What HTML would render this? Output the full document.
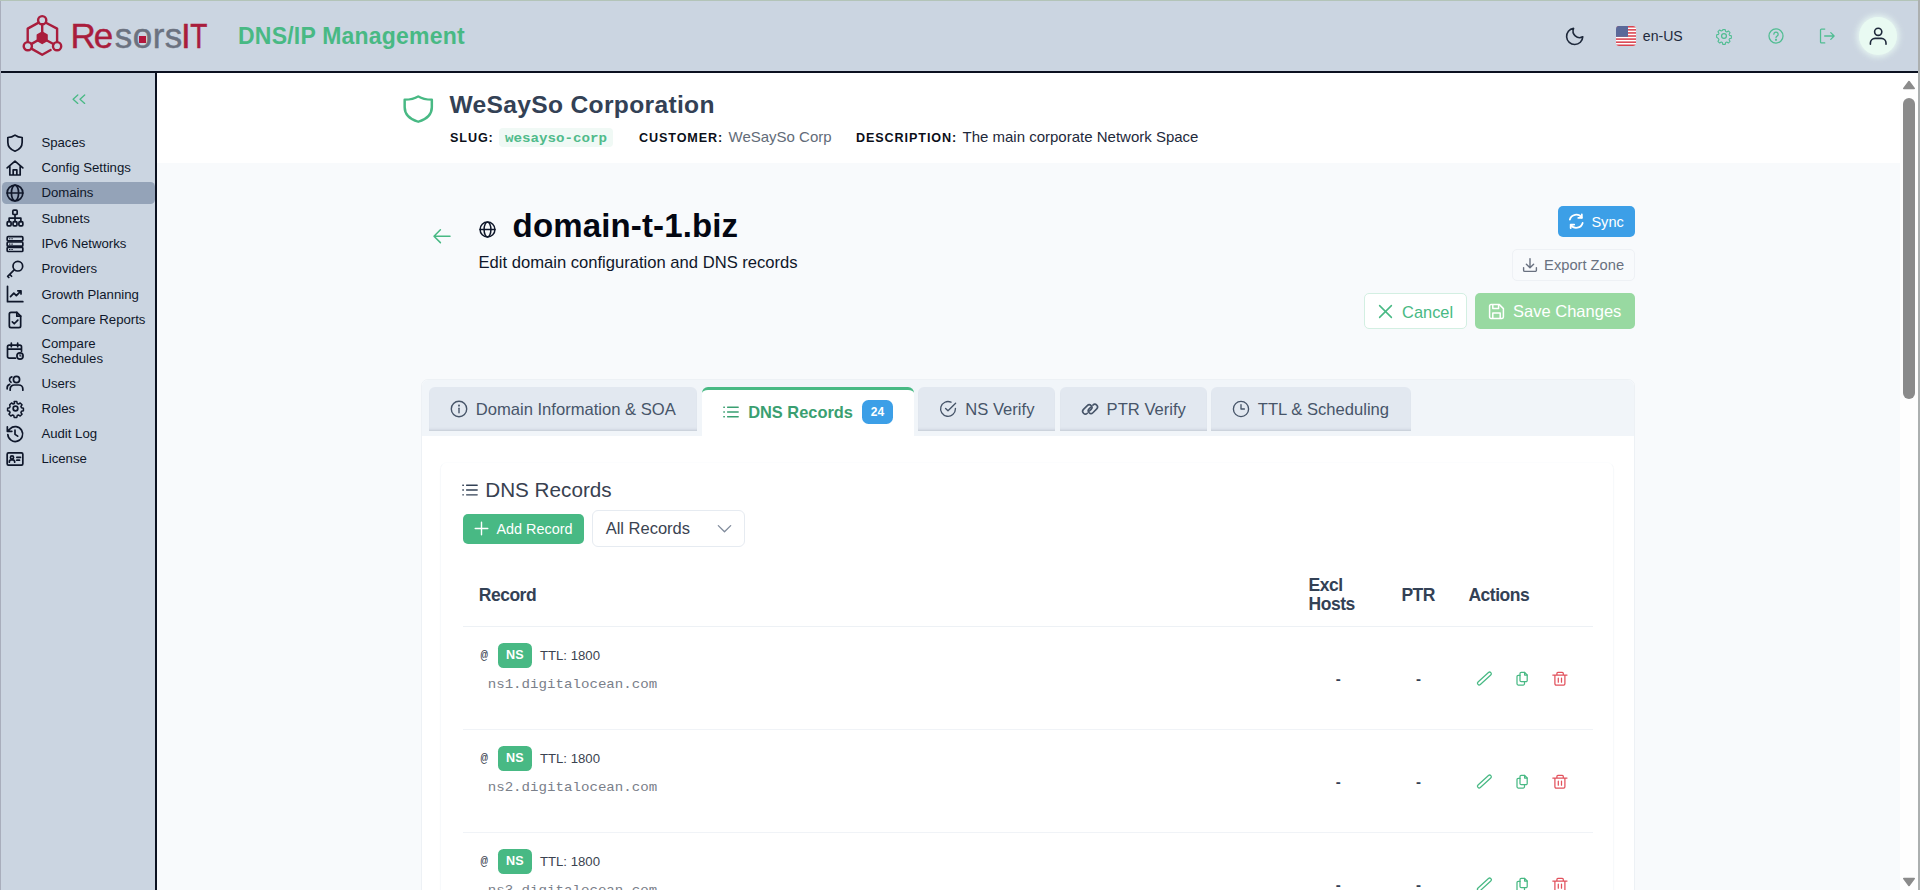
<!DOCTYPE html>
<html lang="en">
<head>
<meta charset="utf-8">
<title>DNS/IP Management - domain-t-1.biz</title>
<style>
*{box-sizing:border-box;margin:0;padding:0}
button{font-family:inherit;border:0;cursor:pointer}
h1,h2,h3,p{font-weight:400}
html,body{width:1920px;height:890px;overflow:hidden;background:#fff}
body{font-family:"Liberation Sans",sans-serif;color:#0f172a;position:relative}
svg{display:block;overflow:visible}
.ic{fill:none;stroke:currentColor;stroke-linecap:round;stroke-linejoin:round}
.abs{position:absolute}
/* window frame */
#frame-l{position:absolute;left:0;top:0;width:1px;height:890px;background:#a9aebc;z-index:50}
#frame-t{position:absolute;left:0;top:0;width:1920px;height:1px;background:#b3c4b8;z-index:50}
#frame-r{position:absolute;left:1918px;top:0;width:2px;height:890px;background:#acb0b0;z-index:50}
/* header */
header{position:absolute;left:0;top:0;width:1920px;height:73px;background:#cbd5e1;border-bottom:2px solid #0b1120}

/* header parts */
#logo{position:absolute;left:21px;top:13px;width:44px;height:44px;color:#a91d3c}
#brand{position:absolute;left:70.500px;top:15.500px;height:40px;line-height:40px;font-size:35px;letter-spacing:-.75px;color:#a91d3c;white-space:nowrap;-webkit-text-stroke:.45px currentColor}
#brand .r1{letter-spacing:-2px}#brand .g{color:#6b7280;letter-spacing:.5px;margin-left:3.5px}#brand .r2{letter-spacing:-4px;margin-left:-1.800px}#brand .t{display:inline-block;transform:scaleX(.8);transform-origin:96% 50%;-webkit-text-stroke:.55px currentColor}
#brand .dot{position:absolute;left:68.700px;top:20px;width:7px;height:7px;background:#b3173c}
#apptitle{position:absolute;left:238px;top:20px;height:32px;line-height:32px;font-size:23px;letter-spacing:.21px;font-weight:700;color:#48b984;white-space:nowrap}
.hbtn{position:absolute;top:27px;width:18px;height:18px}
#lang{position:absolute;left:1642.800px;top:26px;height:20px;line-height:20px;font-size:14.100px;color:#1e293b}
#flag{position:absolute;left:1616px;top:26px;width:20px;height:20px;border-radius:3px;overflow:hidden}
#avatar{position:absolute;left:1859px;top:17px;width:38px;height:38px;border-radius:50%;background:#e9faf2;box-shadow:0 0 6px 2px rgba(236,253,245,.85);color:#1e293b}
/* sidebar */
nav#side{position:absolute;left:0;top:73px;width:157px;height:817px;background:#cbd5e1;border-right:2px solid #0b1120}

#side ul{list-style:none;position:absolute;left:0;top:58.700px;width:155px}
#side li{position:relative;height:21.700px;margin:0 0 3.600px 2px;width:152.500px;border-radius:4.500px;font-size:13.200px;line-height:15.200px;color:#0f172a}
#side li.on{background:#94a3b8}
#side li svg{position:absolute;left:3px;top:.850px;width:20px;height:20px}
#side li span{position:absolute;left:39.400px;top:3.150px;white-space:nowrap}
#side li.two{height:36.200px;margin-top:-1.300px}
#side li.two svg{top:8.100px}
#collapse{position:absolute;left:71px;top:19px;width:16px;height:14px;color:#48b984}
/* main */
main{position:absolute;left:157px;top:73px;width:1743px;height:817px;background:#f8fafc;overflow:hidden}
#spacebar{position:absolute;left:0;top:0;width:1743px;height:90px;background:#fff}

/* main content: coordinates relative to main (157,73) */
.m{position:absolute;white-space:nowrap}
#sp-shield{left:243.900px;top:20.300px;width:34.500px;height:31.500px;color:#48b984}
#sp-title{left:292.500px;top:16px;height:32px;line-height:32px;font-size:24.600px;font-weight:700;letter-spacing:.32px;color:#334155}
.lbl{font-size:12.600px;font-weight:700;letter-spacing:.9px;color:#0b0f19;height:20px;line-height:20px;top:54.500px}
.val{font-size:15px;height:20px;line-height:20px;top:54.300px}
#slug{left:341.700px;top:54.800px;width:114.600px;height:19.700px;border-radius:4px;background:#f0f9f5;color:#50bb8b;font-family:"Liberation Mono",monospace;font-size:14.200px;line-height:19.700px;text-align:center}
#back{left:274px;top:155px;width:22px;height:16px;color:#48b984}
#h-globe{left:320.500px;top:147px;width:19px;height:19px;color:#0f172a}
#h1{left:355.600px;top:132.200px;height:42px;line-height:42px;font-size:33px;font-weight:700;letter-spacing:.14px;color:#030712}
#sub{left:321.500px;top:179.300px;height:22px;line-height:22px;font-size:16.600px;color:#0f172a}
.btn{position:absolute;border-radius:5px;white-space:nowrap}
.btn svg{position:absolute}
.btn span{position:absolute}
#b-sync{left:1400.700px;top:132.800px;width:77.100px;height:31.700px;background:#3c9fe7;color:#fff;font-size:14.600px}
#b-exp{left:1354.500px;top:176.400px;width:123.300px;height:31.300px;background:#f8fafc;border:1px solid #eef1f5;color:#697180;font-size:14.700px}
#b-cancel{left:1206.600px;top:220px;width:103px;height:36.200px;background:#fff;border:1px solid #d3efe2;color:#48b984;font-size:16.400px}
#b-save{left:1317.700px;top:220px;width:160.100px;height:36.200px;background:#98d9a1;color:#fff;font-size:16.500px}

#slug span{display:inline-block;transform:translateY(.8px) scaleY(.92);font-weight:700;-webkit-text-stroke:0}
/* tabs card */
#card{position:absolute;left:263.500px;top:306.300px;width:1214.500px;height:640px;background:#fff;border:1px solid #edf1f5;border-radius:7px;overflow:hidden}
#tabnav{position:absolute;left:0;top:0;width:1214px;height:56px;background:#f1f5f9}
.tab{position:absolute;top:6.400px;height:44.300px;background:#e2e8f0;border-radius:6px 6px 0 0;box-shadow:inset 0 -3px 3px -2px rgba(71,85,105,.22);color:#475569;font-size:16.600px}
.tab svg{position:absolute;top:13.600px;width:18px;height:18px}
.tab span{position:absolute;top:13px;line-height:20px;white-space:nowrap}
.tab.on{background:#fff;height:50px;box-shadow:none;border-top:3px solid #48b984;color:#3a9f71;font-weight:700;font-size:16.400px}
.tab.on svg{top:13px}
.tab.on span{top:12.300px}
#badge{position:absolute;left:160.500px;top:10px;width:30.400px;height:24.300px;border-radius:6.500px;background:#3c9fe7;color:#fff;font-size:12px;font-weight:700;line-height:24.300px;text-align:center}
#inner{position:absolute;left:18.700px;top:82px;width:1174px;height:600px;background:#fff;border:1px solid #f7f9fb;border-top-color:#fcfdfe;border-radius:7px;box-shadow:0 1px 2px rgba(15,23,42,.02)}

/* inner card content: coords relative to #inner (left 441.2, top 462.3 page) */
#inner .t{position:absolute;white-space:nowrap}
#sec-ic{left:20.300px;top:17.800px;width:18px;height:18px;color:#334155}
#sec-h{left:44px;top:13.800px;height:26px;line-height:26px;font-size:20.700px;color:#384150}
#b-add{left:21.500px;top:50.700px;width:121.300px;height:30px;background:#48b984;color:#fff;font-size:14.400px}
#dd{position:absolute;left:151.100px;top:46.800px;width:152.400px;height:36.500px;background:#fff;border:1px solid #e6ebf1;border-radius:6px;color:#3a4351;font-size:16.500px}
#dd span{position:absolute;left:12.400px;top:7px;line-height:20px}
#dd svg{position:absolute;left:123.300px;top:11.600px;width:15px;height:11.250px;color:#7f8a9b}
table#rec{position:absolute;left:22px;top:98px;width:1129.500px;border-collapse:collapse;table-layout:fixed}
#rec th{height:65.700px;text-align:left;font-size:17.500px;letter-spacing:-.5px;font-weight:700;color:#334155;line-height:19px;padding-top:2.500px!important;border-bottom:1px solid #edf1f5;padding:0;vertical-align:middle}
#rec td{height:103px;border-bottom:1px solid #f0f3f7;padding:0;vertical-align:top;position:relative}
#rec tr>:nth-child(1){width:829px;padding-left:15.600px}
#rec tr>:nth-child(2){width:93.500px;padding-left:16.400px}
#rec tr>:nth-child(3){width:66.300px;padding-left:15.700px}
#rec tr>:nth-child(4){padding-left:16.500px}
.rrow{position:absolute;left:16px;top:16.300px;height:26px;white-space:nowrap}
.at{position:absolute;left:1.200px;top:3.700px;font-family:"Liberation Mono",monospace;font-size:12.400px;line-height:18px;color:#3b4350}
.ns{position:absolute;left:18.600px;top:-.4px;width:34px;height:24.400px;border-radius:5.500px;background:#48b984;color:#fff;font-size:12.600px;font-weight:700;line-height:24.400px;text-align:center}
.ttl{position:absolute;left:60.700px;top:3.400px;font-size:13.200px;line-height:18px;color:#3b4350}
.rv{position:absolute;left:24.500px;top:46.700px;font-family:"Liberation Mono",monospace;font-size:14.130px;line-height:20px;color:#7a808a;white-space:nowrap;transform:scaleY(.9);transform-origin:0 76%}
.dash{position:absolute;top:43px;font-size:15px;line-height:18px;color:#334155;font-weight:700}
.act{position:absolute;top:41.200px;width:18px;height:18px}
/* scrollbar */
#sb{position:absolute;left:1900px;top:73px;width:18px;height:817px;background:#fefefe}
#sb i{position:absolute;left:2.700px;top:25.200px;width:12.200px;height:300.500px;border-radius:6.100px;background:#8b8b8b}
#sb svg{position:absolute;left:2px;width:14px;height:10px;fill:#8b8b8b;stroke:#8b8b8b;stroke-width:1.600;stroke-linejoin:round}
</style>
</head>
<body>
<header>
<svg id="logo" viewBox="0 0 44 44"><g class="ic" stroke-width="2.4" stroke-linejoin="miter">
<circle cx="21.2" cy="7.2" r="4.1"/><circle cx="6.8" cy="33.2" r="4.1"/><circle cx="36.1" cy="33.2" r="4.1"/>
<path d="M17.6 9.6 L6.7 15.6 V28.6 M25.4 10 L36.1 15.6 V28.6 M10.4 35.6 L21.2 41.7 L29.6 37"/>
<path d="M21.2 11.5 V20 M16.5 27.5 L10.6 30.9 M25.9 27.5 L32.4 31"/></g>
<path d="M21.2 19.3 L26 22 V27.6 L21.2 30.4 L16.4 27.6 V22 Z" fill="currentColor" stroke="currentColor" stroke-width="1.6" stroke-linejoin="round"/></svg>
<div id="brand"><span class="r1">Re</span><span class="g">sors</span><span class="r2">I<span class="t">T</span></span><span class="dot"></span></div>
<div id="apptitle">DNS/IP Management</div>
<svg class="hbtn" style="left:1565px;top:26px;width:20px;height:20px;color:#1e293b" viewBox="0 0 20 20"><path class="ic" stroke-width="1.6" d="M8.600 2.400 A8.100 8.100 0 1 0 17.800 10.800 A6.600 6.600 0 0 1 8.600 2.400 Z"/></svg>
<svg id="flag" viewBox="0 0 20 20"><rect width="20" height="20" fill="#fff"/>
<g fill="#d9434f"><rect y="0" width="20" height="1.55"/><rect y="3.08" width="20" height="1.55"/><rect y="6.16" width="20" height="1.55"/><rect y="9.24" width="20" height="1.55"/><rect y="12.32" width="20" height="1.55"/><rect y="15.4" width="20" height="1.55"/><rect y="18.48" width="20" height="1.55"/></g>
<rect width="12" height="10.800" fill="#5a6899"/></svg>
<div id="lang">en-US</div>
<svg class="hbtn" style="left:1715px;color:#50bd92" viewBox="0 0 20 20"><g class="ic" stroke-width="1.4"><circle cx="10" cy="10" r="2.7"/><path d="M8.4 1.8h3.2l.5 2.3 1.5.7 2-1.3 2.2 2.2-1.3 2 .7 1.5 2.3.5v3.2l-2.3.5-.7 1.5 1.3 2-2.2 2.2-2-1.3-1.5.7-.5 2.3H8.4l-.5-2.3-1.5-.7-2 1.3-2.2-2.2 1.3-2-.7-1.5L.5 11.6V8.4l2.3-.5.7-1.5-1.3-2 2.2-2.2 2 1.3 1.500-.7z" transform="translate(1.4 1.4) scale(.86)"/></g></svg>
<svg class="hbtn" style="left:1766.600px;color:#50bd92" viewBox="0 0 20 20"><g class="ic" stroke-width="1.4"><circle cx="10" cy="10" r="7.8"/><path d="M7.6 8a2.4 2.4 0 1 1 3.6 2.1c-.8.5-1.200.9-1.200 1.800"/><circle cx="10" cy="14.300" r=".5" fill="currentColor"/></g></svg>
<svg class="hbtn" style="left:1817.800px;color:#50bd92" viewBox="0 0 20 20"><g class="ic" stroke-width="1.4"><path d="M7.500 2.300H3.800a1 1 0 0 0-1 1v13.400a1 1 0 0 0 1 1h3.700"/><path d="M7.400 10h10.400M14.200 6.300 17.900 10l-3.700 3.700"/></g></svg>
<div id="avatar"><svg viewBox="0 0 38 38" width="38" height="38"><g class="ic" stroke-width="1.6"><circle cx="19.200" cy="14.800" r="3.600"/><path d="M11.400 27.200v-1.100a4.700 4.700 0 0 1 4.700-4.700h6.200a4.700 4.700 0 0 1 4.700 4.700v1.100"/></g></svg></div>
</header>
<nav id="side">
<svg id="collapse" viewBox="0 0 16 14"><g class="ic" stroke-width="1.300"><path d="M6.800 3 2.100 7.200 6.800 11.400M13.700 3 9 7.200l4.700 4.200"/></g></svg>
<ul>
<li class=""><svg viewBox="0 0 24 24"><g class="ic" stroke-width="2.050"><path d="M12 2.600C9.300 4.700 6.400 5.400 3.400 5.400v5.800c0 5.300 3.300 8.900 8.600 10.700 5.300-1.800 8.600-5.400 8.600-10.700V5.400c-3 0-5.900-.7-8.600-2.800z"/></g></svg><span>Spaces</span></li>
<li class=""><svg viewBox="0 0 24 24"><g class="ic" stroke-width="2.050"><path d="M2.600 11.800 12 3.800l9.400 8M5.800 9.800v10.600h12.400V9.800M9.800 20.400v-6.200h4.400v6.200"/></g></svg><span>Config Settings</span></li>
<li class="on"><svg viewBox="0 0 24 24"><g class="ic" stroke-width="2.050"><circle cx="12" cy="12" r="9.400"/><path d="M2.600 12h18.800"/><ellipse cx="12" cy="12" rx="4.300" ry="9.400"/></g></svg><span>Domains</span></li>
<li class=""><svg viewBox="0 0 24 24"><g class="ic" stroke-width="2.050"><rect x="9.400" y="2.600" width="5.200" height="5.200" rx="1.200"/><rect x="2.600" y="16.400" width="4.700" height="5" rx="1.200"/><rect x="9.650" y="16.400" width="4.700" height="5" rx="1.200"/><rect x="16.700" y="16.400" width="4.700" height="5" rx="1.200"/><path d="M12 7.800v8.600M4.950 16.400v-4.200h14.100v4.200"/></g></svg><span>Subnets</span></li>
<li class=""><svg viewBox="0 0 24 24"><g class="ic" stroke-width="2.050"><rect x="2.600" y="3.200" width="18.800" height="5" rx="1.200"/><rect x="2.600" y="9.600" width="18.800" height="5" rx="1.200"/><rect x="2.600" y="16" width="18.800" height="5" rx="1.200"/><path d="M5.400 5.700h.6M8.200 5.700h.6M5.400 12.100h.6M8.200 12.100h.6M5.400 18.500h.6M8.200 18.500h.6" stroke-width="1.300"/></g></svg><span>IPv6 Networks</span></li>
<li class=""><svg viewBox="0 0 24 24"><g class="ic" stroke-width="2.050"><circle cx="15.400" cy="8.600" r="5.800"/><path d="M11.300 12.700 3.200 20.800M5.600 18.400l2.300 2.300M3.200 20.800l1.400 1.400"/></g></svg><span>Providers</span></li>
<li class=""><svg viewBox="0 0 24 24"><g class="ic" stroke-width="2.050"><path d="M3 2.800v18.400h18.400"/><path d="M6.600 15.200l4-4.200 3 3 5.600-5.800M15.400 8.200h3.800v3.800"/></g></svg><span>Growth Planning</span></li>
<li class=""><svg viewBox="0 0 24 24"><g class="ic" stroke-width="2.050"><path d="M14.200 2.800H7.200a2 2 0 0 0-2 2v14.400a2 2 0 0 0 2 2h9.600a2 2 0 0 0 2-2V7.400z"/><path d="M14.200 2.800v4.600h4.600M8.800 14.200l2.300 2.300 4.300-4.400"/></g></svg><span>Compare Reports</span></li>
<li class="two"><svg viewBox="0 0 24 24"><g class="ic" stroke-width="2.050"><path d="M12.400 20.600H5a2 2 0 0 1-2-2V7a2 2 0 0 1 2-2h12.800a2 2 0 0 1 2 2v5.200M3 9.800h16.800M7.600 2.600v4.200M15.200 2.600v4.200"/><circle cx="18" cy="18" r="3.700"/><path d="M18 16.200V18h1.400" stroke-width="1.300"/></g></svg><span>Compare<br>Schedules</span></li>
<li class=""><svg viewBox="0 0 24 24"><g class="ic" stroke-width="2.050"><circle cx="13.800" cy="7.800" r="3.700"/><path d="M6.200 20.600v-1.400a4.800 4.800 0 0 1 4.800-4.800h5.600a4.800 4.800 0 0 1 4.800 4.800v1.400"/><path d="M8.200 4.600a3.500 3.500 0 0 0-1 6.500M2.600 19v-1.200a4.400 4.400 0 0 1 3-4.200"/></g></svg><span>Users</span></li>
<li class=""><svg viewBox="0 0 24 24"><g class="ic" stroke-width="2.050"><circle cx="12.600" cy="11.400" r="2.800"/><path d="M10.200 2.600h3.600l.6 2.700 1.700.7 2.300-1.500 2.500 2.500-1.500 2.300.7 1.700 2.700.6v3.600l-2.700.6-.7 1.700 1.500 2.300-2.500 2.500-2.300-1.500-1.700.7-.6 2.700h-3.600l-.6-2.700-1.700-.7-2.300 1.500-2.500-2.500 1.500-2.300-.7-1.700-2.700-.6v-3.600l2.700-.6.7-1.700L4.100 7l2.500-2.500 2.300 1.500 1.700-.7z" transform="translate(2.040 .840) scale(.88)"/></g></svg><span>Roles</span></li>
<li class=""><svg viewBox="0 0 24 24"><g class="ic" stroke-width="2.050"><path d="M3.400 12.600A8.900 8.900 0 1 0 6 5.800L2.800 8.800M2.800 3.400v5.400h5.400M12 7.400v5l3.200 2.200"/></g></svg><span>Audit Log</span></li>
<li class=""><svg viewBox="0 0 24 24"><g class="ic" stroke-width="2.050"><rect x="2.600" y="4.600" width="18.800" height="14.800" rx="1.600"/><circle cx="8.400" cy="10.200" r="1.900"/><path d="M5.200 15.800v-.4a2.400 2.400 0 0 1 2.400-2.400h1.600a2.400 2.400 0 0 1 2.400 2.400v.4M14.200 10h4.400M14.200 13.400h3.200"/></g></svg><span>License</span></li>
</ul>
</nav>
<main>
<section id="spacebar">
<svg class="m" id="sp-shield" viewBox="0 0 32 32" preserveAspectRatio="none"><path class="ic" stroke-width="2.300" d="M16 3.400c-3.600 2.600-7.800 3.400-12.600 3.400v7.600c0 7.400 4.800 12.200 12.600 14.800 7.800-2.600 12.600-7.400 12.600-14.800V6.800c-4.800 0-9-.8-12.600-3.400z"/></svg>
<h2 class="m" id="sp-title">WeSaySo Corporation</h2>
<span class="m lbl" style="left:293px">SLUG:</span><code class="m" id="slug"><span>wesayso-corp</span></code>
<span class="m lbl" style="left:482px">CUSTOMER:</span><span class="m val" style="left:571.500px;color:#626b78">WeSaySo Corp</span>
<span class="m lbl" style="left:699px">DESCRIPTION:</span><span class="m val" style="left:805.500px;color:#1e293b">The main corporate Network Space</span>
</section>
<svg class="m" id="back" viewBox="0 0 22 16"><path class="ic" stroke-width="1.500" d="M19 8.200H3M9.400 1.800 3 8.200l6.400 6.400"/></svg>
<svg class="m" id="h-globe" viewBox="0 0 24 24"><g class="ic" stroke-width="1.900"><circle cx="12" cy="12" r="9.400"/><path d="M2.600 12h18.800"/><ellipse cx="12" cy="12" rx="4.300" ry="9.400"/></g></svg>
<h1 class="m" id="h1">domain-t-1.biz</h1>
<p class="m" id="sub">Edit domain configuration and DNS records</p>
<button class="btn" id="b-sync"><svg style="left:10.300px;top:7.600px;width:16.500px;height:16.500px" viewBox="0 0 16 16"><g class="ic" stroke-width="1.750" transform="translate(16 0) scale(-1 1)"><path d="M14.200 6.400A6.400 6.400 0 0 0 2.800 4.400M1.800 9.600a6.400 6.400 0 0 0 11.400 2"/><path d="M2.600 1.400v3.400H6M13.400 14.600v-3.400H10"/></g></svg><span style="left:33.700px;top:7px;line-height:18px">Sync</span></button>
<button class="btn" id="b-exp"><svg style="left:9px;top:6.600px;width:16px;height:16px" viewBox="0 0 16 16"><g class="ic" stroke-width="1.400"><path d="M8 1.600v9M4.400 7.200 8 10.800l3.600-3.600M1.600 10.600v2.600a1.200 1.200 0 0 0 1.200 1.200h10.400a1.200 1.200 0 0 0 1.200-1.200v-2.600"/></g></svg><span style="left:31.600px;top:5.800px;line-height:18px">Export Zone</span></button>
<button class="btn" id="b-cancel"><svg style="left:13.500px;top:10px;width:15px;height:15px" viewBox="0 0 15 15"><path class="ic" stroke-width="1.500" d="M1.600 1.600 13.400 13.400M13.400 1.600 1.600 13.400"/></svg><span style="left:37.500px;top:7.600px;line-height:20px">Cancel</span></button>
<button class="btn" id="b-save"><svg style="left:13px;top:10px;width:17px;height:17px" viewBox="0 0 17 17"><g class="ic" stroke-width="1.500"><path d="M1.600 3a1.400 1.400 0 0 1 1.400-1.400h8.400l4 4V14a1.400 1.400 0 0 1-1.400 1.400H3A1.400 1.400 0 0 1 1.600 14z"/><path d="M4.800 1.800v3.600h5.800V1.800M4.800 15.200V10h7.400v5.200"/></g></svg><span style="left:38.400px;top:7.600px;line-height:20px">Save Changes</span></button>
<section id="card">
<div id="tabnav">
<div class="tab" style="left:7.500px;width:267.700px"><svg style="left:20.600px" viewBox="0 0 18 18"><g class="ic" stroke-width="1.400"><circle cx="9" cy="9" r="7.700"/><path d="M9 8.200v4.600"/><circle cx="9" cy="5.600" r=".4" fill="currentColor"/></g></svg><span style="left:46.700px">Domain Information &amp; SOA</span></div>
<div class="tab on" style="left:280.200px;width:212.600px"><svg style="left:20.800px" viewBox="0 0 18 18"><g class="ic" stroke-width="1.400"><path d="M5.600 4.200h10.600M5.600 9h10.600M5.600 13.800h10.600M1.800 4.200h.6M1.800 9h.6M1.800 13.800h.6"/></g></svg><span style="left:46.500px">DNS Records</span><b id="badge">24</b></div>
<div class="tab" style="left:496.800px;width:136.700px"><svg style="left:20.500px" viewBox="0 0 18 18"><g class="ic" stroke-width="1.350"><path d="M16.400 8.300V9a7.400 7.400 0 1 1-4.400-6.800"/><path d="M16.600 3.200 9 10.800 6.600 8.400"/></g></svg><span style="left:47px">NS Verify</span></div>
<div class="tab" style="left:638.700px;width:146.800px"><svg style="left:20.500px" viewBox="0 0 18 18"><g class="ic" stroke-width="1.600"><path transform="translate(6.300 9.400) rotate(-45)" d="M-2.700 2.700a2.700 2.700 0 0 1 0-5.400H2.700a2.700 2.700 0 0 1 0 5.400H.400"/><path transform="translate(11.900 8.900) rotate(-45)" d="M2.700-2.700a2.700 2.700 0 0 1 0 5.400H-2.700a2.700 2.700 0 0 1 0-5.400H-.400"/></g></svg><span style="left:46.400px">PTR Verify</span></div>
<div class="tab" style="left:789.900px;width:199.400px"><svg style="left:20.500px" viewBox="0 0 18 18"><g class="ic" stroke-width="1.350"><circle cx="9" cy="9" r="7.600"/><path d="M9 4.600V9h3.400"/></g></svg><span style="left:46.400px">TTL &amp; Scheduling</span></div>
</div>
<div id="inner">
<svg class="t" id="sec-ic" viewBox="0 0 18 18"><g class="ic" stroke-width="1.350"><path d="M5.600 4.200h10.600M5.600 9h10.600M5.600 13.800h10.600M1.800 4.200h.6M1.800 9h.6M1.800 13.800h.6"/></g></svg>
<h3 class="t" id="sec-h">DNS Records</h3>
<button class="btn" id="b-add"><svg style="left:11px;top:7.500px;width:15px;height:15px" viewBox="0 0 15 15"><path class="ic" stroke-width="1.400" d="M7.500 1.200v12.600M1.200 7.500h12.600"/></svg><span style="left:33.800px;top:6px;line-height:18px">Add Record</span></button>
<div id="dd"><span>All Records</span><svg viewBox="0 0 16 12"><path class="ic" stroke-width="1.400" d="M1.400 2.800 8 9.400l6.600-6.600"/></svg></div>
<table id="rec">
<thead><tr><th>Record</th><th>Excl<br>Hosts</th><th>PTR</th><th>Actions</th></tr></thead>
<tbody>
<tr><td><div class="rrow"><span class="at">@</span><b class="ns">NS</b><span class="ttl">TTL: 1800</span></div><code class="rv">ns1.digitalocean.com</code></td><td><span class="dash" style="left:43.500px">-</span></td><td><span class="dash" style="left:30.300px">-</span></td><td><svg class="act" style="left:24px;color:#48b984" viewBox="0 0 18 18"><rect class="ic" stroke-width="1.250" x="-8.750" y="-1.700" width="17.500" height="3.400" rx="1.700" transform="translate(8.400 9.550) rotate(-42.400)"/></svg><svg class="act" style="left:61.500px;color:#48b984" viewBox="0 0 18 18"><g class="ic" stroke-width="1.250"><path d="M8.200 3.400h3.400l2.600 2.600v5.500a1.200 1.200 0 0 1-1.200 1.200H8.200a1.200 1.200 0 0 1-1.200-1.200V4.600a1.200 1.200 0 0 1 1.200-1.200z"/><path d="M11.600 3.400v2.600h2.600"/><path d="M7 6.400H5.200a1.200 1.200 0 0 0-1.200 1.200v7.200a1.200 1.200 0 0 0 1.200 1.200h5.100a1.200 1.200 0 0 0 1.200-1.200v-2.100"/></g></svg><svg class="act" style="left:99px;color:#e2515c" viewBox="0 0 18 18"><g class="ic" stroke-width="1.250"><path d="M1.800 6.100H16M5.900 6.100V4.400a1 1 0 0 1 1-1h4.400a1 1 0 0 1 1 1v1.700M3.900 6.100v8.700a1.300 1.300 0 0 0 1.300 1.300h7.400a1.300 1.300 0 0 0 1.300-1.300V6.100M7.300 9.200v4M10.500 9.200v4"/></g></svg></td></tr>
<tr><td><div class="rrow"><span class="at">@</span><b class="ns">NS</b><span class="ttl">TTL: 1800</span></div><code class="rv">ns2.digitalocean.com</code></td><td><span class="dash" style="left:43.500px">-</span></td><td><span class="dash" style="left:30.300px">-</span></td><td><svg class="act" style="left:24px;color:#48b984" viewBox="0 0 18 18"><rect class="ic" stroke-width="1.250" x="-8.750" y="-1.700" width="17.500" height="3.400" rx="1.700" transform="translate(8.400 9.550) rotate(-42.400)"/></svg><svg class="act" style="left:61.500px;color:#48b984" viewBox="0 0 18 18"><g class="ic" stroke-width="1.250"><path d="M8.200 3.400h3.400l2.600 2.600v5.500a1.200 1.200 0 0 1-1.200 1.200H8.200a1.200 1.200 0 0 1-1.200-1.200V4.600a1.200 1.200 0 0 1 1.200-1.200z"/><path d="M11.600 3.400v2.600h2.600"/><path d="M7 6.400H5.200a1.200 1.200 0 0 0-1.200 1.200v7.200a1.200 1.200 0 0 0 1.200 1.200h5.100a1.200 1.200 0 0 0 1.200-1.200v-2.100"/></g></svg><svg class="act" style="left:99px;color:#e2515c" viewBox="0 0 18 18"><g class="ic" stroke-width="1.250"><path d="M1.800 6.100H16M5.900 6.100V4.400a1 1 0 0 1 1-1h4.400a1 1 0 0 1 1 1v1.700M3.900 6.100v8.700a1.300 1.300 0 0 0 1.300 1.300h7.400a1.300 1.300 0 0 0 1.300-1.300V6.100M7.300 9.200v4M10.500 9.200v4"/></g></svg></td></tr>
<tr><td><div class="rrow"><span class="at">@</span><b class="ns">NS</b><span class="ttl">TTL: 1800</span></div><code class="rv">ns3.digitalocean.com</code></td><td><span class="dash" style="left:43.500px">-</span></td><td><span class="dash" style="left:30.300px">-</span></td><td><svg class="act" style="left:24px;color:#48b984" viewBox="0 0 18 18"><rect class="ic" stroke-width="1.250" x="-8.750" y="-1.700" width="17.500" height="3.400" rx="1.700" transform="translate(8.400 9.550) rotate(-42.400)"/></svg><svg class="act" style="left:61.500px;color:#48b984" viewBox="0 0 18 18"><g class="ic" stroke-width="1.250"><path d="M8.200 3.400h3.400l2.600 2.600v5.500a1.200 1.200 0 0 1-1.200 1.200H8.200a1.200 1.200 0 0 1-1.200-1.200V4.600a1.200 1.200 0 0 1 1.200-1.200z"/><path d="M11.600 3.400v2.600h2.600"/><path d="M7 6.400H5.200a1.200 1.200 0 0 0-1.200 1.200v7.200a1.200 1.200 0 0 0 1.200 1.200h5.100a1.200 1.200 0 0 0 1.200-1.200v-2.100"/></g></svg><svg class="act" style="left:99px;color:#e2515c" viewBox="0 0 18 18"><g class="ic" stroke-width="1.250"><path d="M1.800 6.100H16M5.900 6.100V4.400a1 1 0 0 1 1-1h4.400a1 1 0 0 1 1 1v1.700M3.900 6.100v8.700a1.300 1.300 0 0 0 1.300 1.300h7.400a1.300 1.300 0 0 0 1.300-1.300V6.100M7.300 9.200v4M10.500 9.200v4"/></g></svg></td></tr>
</tbody>
</table>
</div>
</section>
</main>
<div id="sb"><svg style="top:6.500px" viewBox="0 0 14 10"><path d="M7 1.600 12.200 8.400H1.800z"/></svg><i></i><svg style="top:803.500px" viewBox="0 0 14 10"><path d="M7 8.400 12.200 1.600H1.800z"/></svg></div>
<div id="frame-l"></div><div id="frame-t"></div><div id="frame-r"></div>
</body>
</html>
